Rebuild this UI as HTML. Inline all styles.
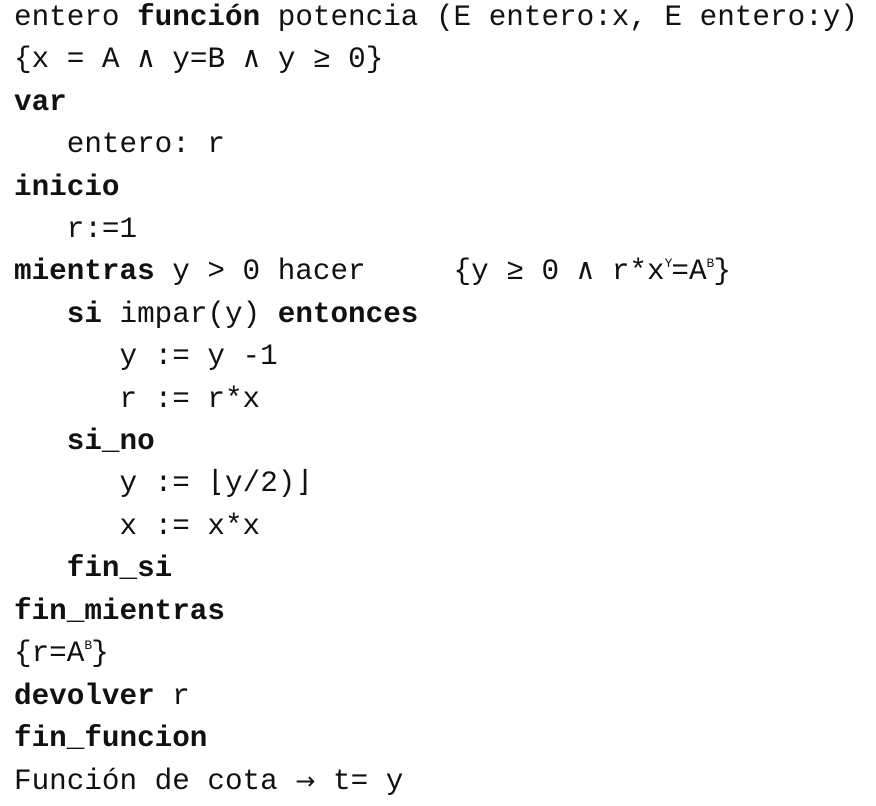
<!DOCTYPE html>
<html><head><meta charset="utf-8"><style>
html,body{margin:0;padding:0;background:#fff;width:876px;height:806px;overflow:hidden}
pre{margin:0;position:absolute;left:14px;top:-3px;font-family:"Liberation Mono","DejaVu Sans Mono",monospace;font-size:29.3px;line-height:42.4px;color:#111}
b{font-weight:bold}
sup{font-family:"Liberation Mono",monospace;font-size:13px;line-height:0;vertical-align:0;position:relative;top:-12px;letter-spacing:-1px}
.ar{font-family:"DejaVu Sans",sans-serif;font-size:24px}
</style></head><body>
<pre>entero <b>función</b> potencia (E entero:x, E entero:y)
{x = A ∧ y=B ∧ y ≥ 0}
<b>var</b>
   entero: r
<b>inicio</b>
   r:=1
<b>mientras</b> y &gt; 0 hacer     {y ≥ 0 ∧ r*x<sup>Y</sup>=A<sup>B</sup>}
   <b>si</b> impar(y) <b>entonces</b>
      y := y -1
      r := r*x
   <b>si_no</b>
      y := ⌊y/2)⌋
      x := x*x
   <b>fin_si</b>
<b>fin_mientras</b>
{r=A<sup>B</sup>}
<b>devolver</b> r
<b>fin_funcion</b>
Función de cota <span class="ar">→</span> t= y</pre>
</body></html>
